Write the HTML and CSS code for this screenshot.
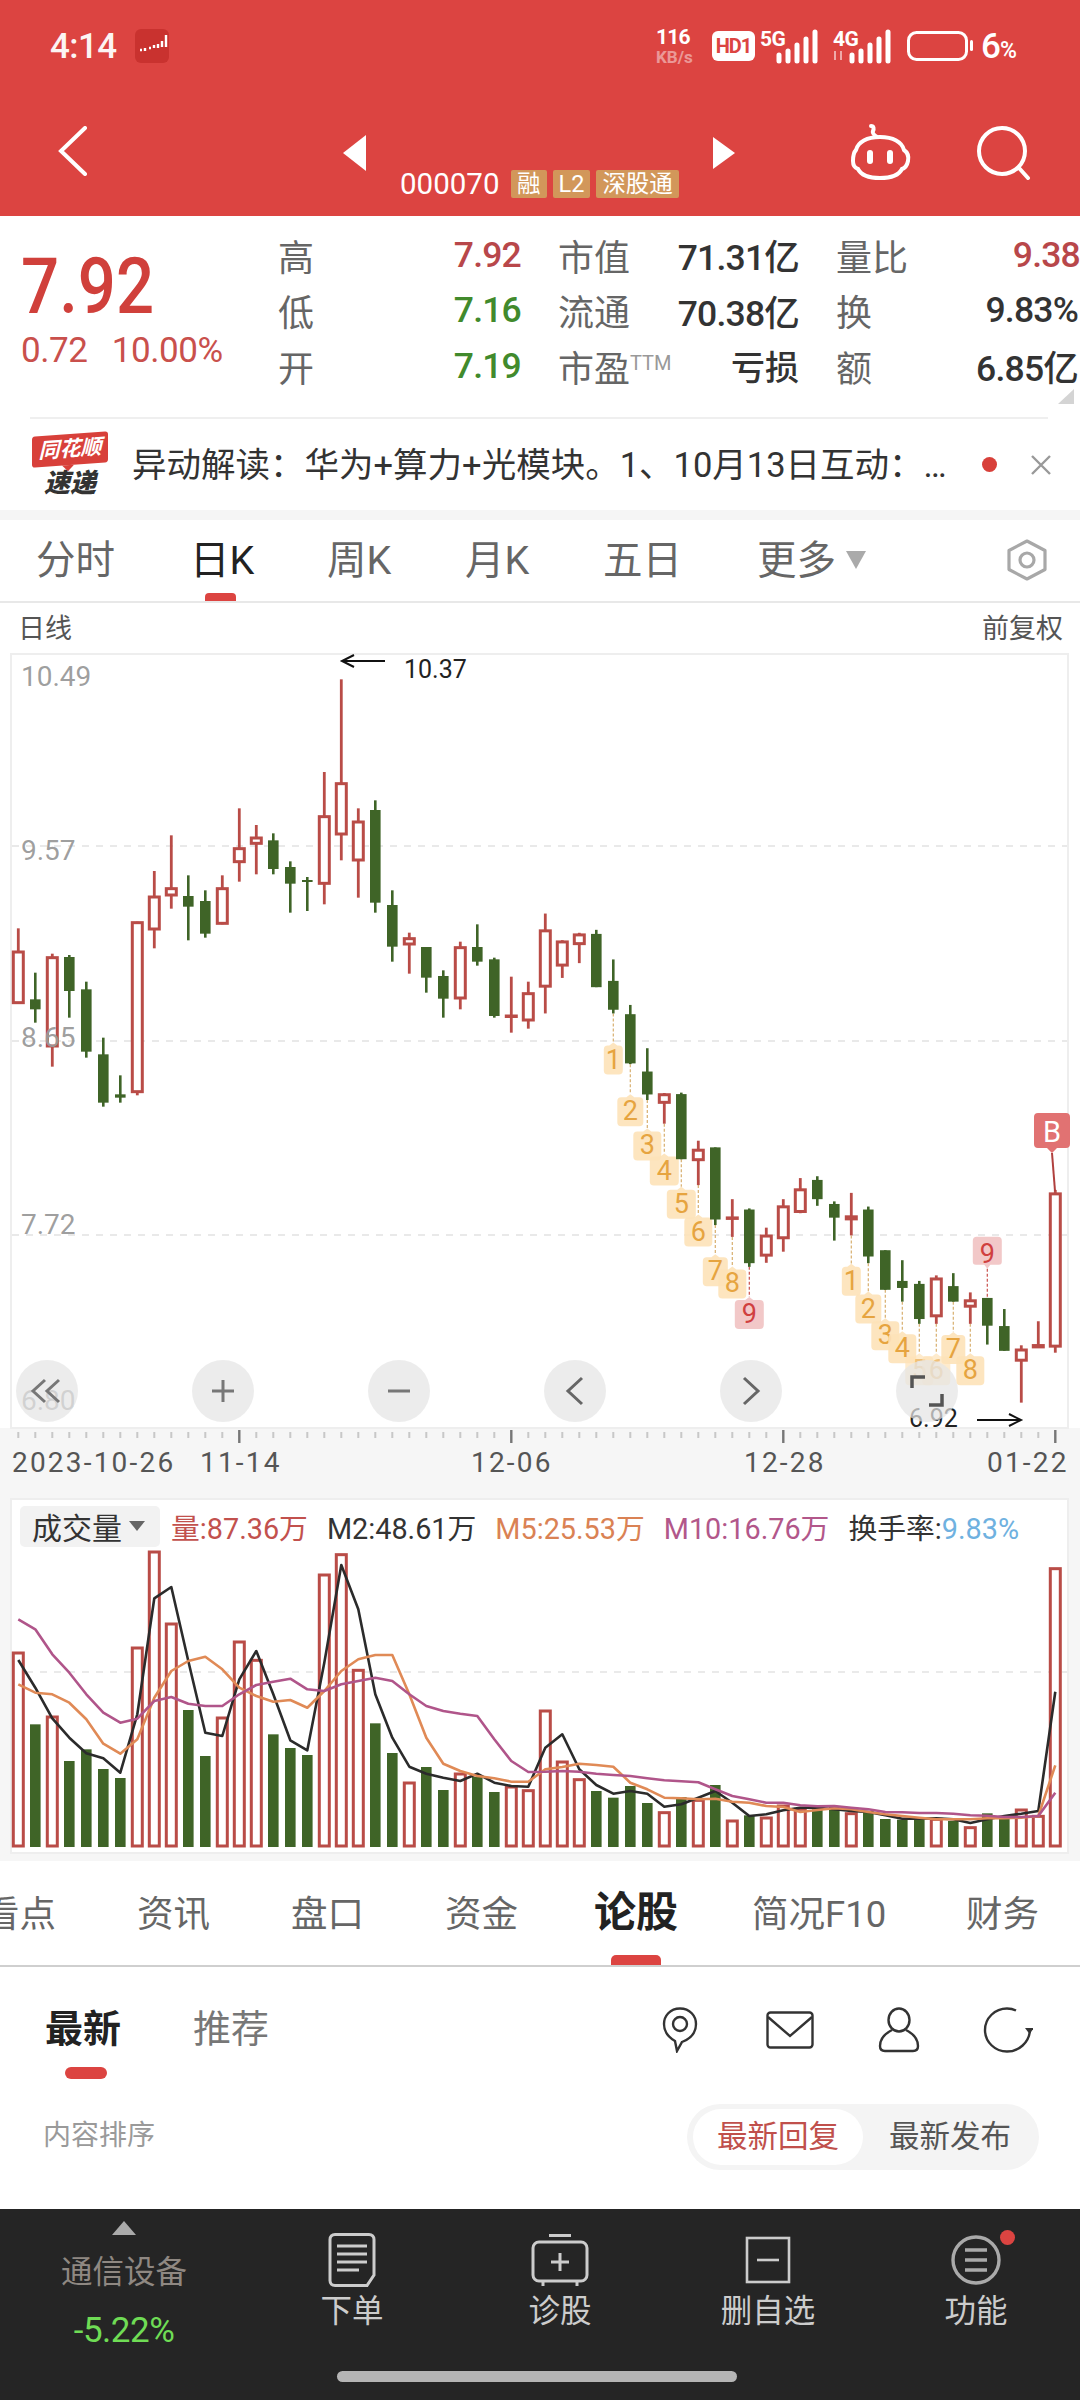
FILE: index.html
```html
<!DOCTYPE html>
<html lang="zh">
<head>
<meta charset="utf-8">
<title>000070</title>
<link rel="stylesheet" href="styles.css">
</head>
<body>
<div class="phone">
  <header class="top">
    <div class="status">
      <span class="time">4:14</span>
      <svg class="app-ico" width="34" height="34" viewBox="0 0 34 34"><rect width="34" height="34" rx="6" fill="#c9322f"/><path d="M5 21h2M10 19v3M14 19h2M19 16v3M23 15v4M27 12v6M31 6v12" stroke="#fff" stroke-width="2.4"/></svg>
      <div class="status-right">
        <div class="speed"><span class="speed-num">116</span><span class="speed-unit">KB/s</span></div>
        <span class="hd">HD1</span>
        <svg class="net" width="61" height="36" viewBox="0 0 61 36"><text x="0" y="18" class="net-t">5G</text><path d="M19 27v6M28 23v10M37 17v16M46 11v22M55 4v29" stroke="#fff" stroke-width="5" stroke-linecap="round"/></svg>
        <svg class="net net2" width="60" height="36" viewBox="0 0 60 36"><text x="0" y="18" class="net-t">4G</text><path d="M2 23v9M8 23v9" stroke="#fff" stroke-width="2" opacity=".55"/><path d="M19 27v6M28 23v10M37 17v16M46 11v22M55 4v29" stroke="#fff" stroke-width="5" stroke-linecap="round"/></svg>
        <svg class="batt" width="66" height="30" viewBox="0 0 66 30"><rect x="1.5" y="1.5" width="58" height="27" rx="8" fill="none" stroke="#fff" stroke-width="3"/><rect x="63" y="9" width="3" height="11" rx="1.5" fill="#fff"/></svg>
        <span class="pct">6<small>%</small></span>
      </div>
    </div>
    <nav class="nav">
      <svg class="back" width="30" height="50" viewBox="0 0 30 50"><path d="M27 2 3 25l24 23" fill="none" stroke="#fff" stroke-width="4" stroke-linecap="round"/></svg>
      <div class="nav-mid">
        <div class="arrows">
          <svg width="23" height="36" viewBox="0 0 23 36"><path d="M23 0v36L0 18z" fill="#fff"/></svg>
          <svg width="22" height="32" viewBox="0 0 22 32"><path d="M0 0v32l22-16z" fill="#fff"/></svg>
        </div>
        <div class="code-row">
          <span class="code">000070</span>
          <span class="tag">融</span><span class="tag">L2</span><span class="tag">深股通</span>
        </div>
      </div>
      <svg class="robot" width="62" height="56" viewBox="0 0 62 56"><path d="M21 2c3 0 3 3 2 5s1 4 4 6" fill="none" stroke="#fff" stroke-width="4" stroke-linecap="round"/><path d="M6 26C8 18 17 13 30 13s22 5 24 13c3 2 5 6 4 11s-3 7-6 8c-3 6-11 9-22 9S11 51 8 45c-3-1-5-4-5-8s1-9 3-11z" fill="none" stroke="#fff" stroke-width="4"/><rect x="17" y="26" width="6" height="14" rx="3" fill="#fff"/><rect x="37" y="26" width="6" height="14" rx="3" fill="#fff"/></svg>
      <svg class="search" width="54" height="54" viewBox="0 0 54 54"><circle cx="25" cy="25" r="23" fill="none" stroke="#fff" stroke-width="4"/><path d="M42 42l9 10" stroke="#fff" stroke-width="4" stroke-linecap="round"/></svg>
    </nav>
  </header>

  <section class="quote">
    <div class="price-col">
      <div class="price">7.92</div>
      <div class="change"><span>0.72</span><span>10.00%</span></div>
    </div>
    <div class="stats">
      <div class="stat"><span class="k">高</span><span class="v up">7.92</span></div>
      <div class="stat"><span class="k">市值</span><span class="v">71.31亿</span></div>
      <div class="stat"><span class="k">量比</span><span class="v up edge">9.38</span></div>
      <div class="stat"><span class="k">低</span><span class="v down">7.16</span></div>
      <div class="stat"><span class="k">流通</span><span class="v">70.38亿</span></div>
      <div class="stat"><span class="k">换</span><span class="v">9.83%</span></div>
      <div class="stat"><span class="k">开</span><span class="v down">7.19</span></div>
      <div class="stat"><span class="k">市盈<sup class="ttm">TTM</sup></span><span class="v cjk">亏损</span></div>
      <div class="stat"><span class="k">额</span><span class="v">6.85亿</span></div>
    </div>
    <span class="fold"></span>
  </section>

  <section class="news">
    <div class="logo">
      <div class="logo-flag">同花顺</div>
      <div class="logo-word">速递</div>
    </div>
    <p class="news-text">异动解读：华为+算力+光模块。1、10月13日互动：…</p>
    <span class="news-dot"></span>
    <svg class="news-x" width="22" height="22" viewBox="0 0 22 22"><path d="M2 2l18 18M20 2 2 20" stroke="#999" stroke-width="2.4"/></svg>
  </section>

  <section class="period">
    <div class="period-tabs">
      <span class="ptab">分时</span>
      <span class="ptab active">日K</span>
      <span class="ptab">周K</span>
      <span class="ptab">月K</span>
      <span class="ptab">五日</span>
      <span class="ptab more">更多<i class="tri"></i></span>
    </div>
    <svg class="hex" width="44" height="42" viewBox="0 0 44 42"><path d="M22 2 40 11.500v19L22 40 4 30.500v-19z" fill="none" stroke="#a8a8a8" stroke-width="3.200" stroke-linejoin="round"/><circle cx="22" cy="21" r="7" fill="none" stroke="#a8a8a8" stroke-width="3.200"/></svg>
  </section>

  <div class="chart-head"><span>日线</span><span>前复权</span></div>

  <div class="chart-wrap">
    <svg id="price" class="chart" width="1080" height="845" viewBox="0 652 1080 845"></svg>
    <div class="chart-btns">
      <span class="cbtn"><svg width="34" height="26" viewBox="0 0 34 26"><path d="M15 2 3 13l12 11M29 2 17 13l12 11" fill="none" stroke="#777" stroke-width="3"/></svg></span>
      <span class="cbtn"><svg width="26" height="26" viewBox="0 0 26 26"><path d="M2 13h22M13 2v22" stroke="#777" stroke-width="3"/></svg></span>
      <span class="cbtn"><svg width="26" height="26" viewBox="0 0 26 26"><path d="M2 13h22" stroke="#777" stroke-width="3"/></svg></span>
      <span class="cbtn"><svg width="20" height="30" viewBox="0 0 20 30"><path d="M17 2 3 15l14 13" fill="none" stroke="#666" stroke-width="3"/></svg></span>
      <span class="cbtn"><svg width="20" height="30" viewBox="0 0 20 30"><path d="M3 2l14 13L3 28" fill="none" stroke="#666" stroke-width="3"/></svg></span>
      <span class="cbtn"><svg width="34" height="34" viewBox="0 0 34 34"><path d="M2 14V3h13M32 20v11H19" fill="none" stroke="#555" stroke-width="3.500"/></svg></span>
    </div>
  </div>

  <div class="vol-wrap">
    <svg id="volume" class="chart" width="1080" height="363" viewBox="0 1497 1080 363"></svg>
    <div class="legend">
      <span class="pill">成交量<i class="pill-tri"></i></span>
      <span class="l-red">量:87.36万</span>
      <span class="l-dark">M2:48.61万</span>
      <span class="l-orange">M5:25.53万</span>
      <span class="l-purple">M10:16.76万</span>
      <span class="l-dark">换手率:<b class="l-blue">9.83%</b></span>
    </div>
  </div>

  <section class="subtabs">
    <span class="stab">看点</span>
    <span class="stab">资讯</span>
    <span class="stab">盘口</span>
    <span class="stab">资金</span>
    <span class="stab active">论股</span>
    <span class="stab">简况F10</span>
    <span class="stab">财务</span>
  </section>

  <section class="forum-head">
    <span class="ftab active">最新</span>
    <span class="ftab">推荐</span>
    <div class="forum-icons">
      <svg width="36" height="46" viewBox="0 0 36 46"><path d="M18 1.500C8 1.500 2 9 2 17c0 7 4 13 11 17l2 10 5-9c8-3 14-9 14-18C34 9 28 1.500 18 1.500z" fill="none" stroke="#333" stroke-width="2.400"/><circle cx="18" cy="17" r="7" fill="none" stroke="#333" stroke-width="2.400"/></svg>
      <svg width="48" height="38" viewBox="0 0 48 38"><rect x="1.500" y="1.500" width="45" height="35" rx="3" fill="none" stroke="#333" stroke-width="2.400"/><path d="M2 6l22 19L46 6" fill="none" stroke="#333" stroke-width="2.400"/></svg>
      <svg width="42" height="46" viewBox="0 0 42 46"><ellipse cx="21" cy="13" rx="10.500" ry="11.500" fill="none" stroke="#333" stroke-width="2.400"/><path d="M14 23C6 27 2 33 2 39c0 3 2 5 5 5h28c3 0 5-2 5-5 0-6-4-12-12-16" fill="none" stroke="#333" stroke-width="2.400"/></svg>
      <svg width="50" height="46" viewBox="0 0 50 46"><path d="M33 3.500C30 2 27 1.500 24 1.500 12 1.500 2 11 2 23s10 21.500 22 21.500c12 0 22-9 23-21" fill="none" stroke="#333" stroke-width="2.400"/><path d="M42 21h9l-4.500 6z" fill="#333"/></svg>
    </div>
  </section>

  <section class="sort-row">
    <span class="sort-label">内容排序</span>
    <div class="seg">
      <span class="seg-item on">最新回复</span>
      <span class="seg-item">最新发布</span>
    </div>
  </section>

  <footer class="bottom">
    <div class="sector">
      <i class="sector-tri"></i>
      <span class="sector-name">通信设备</span>
      <span class="sector-pct">-5.22%</span>
    </div>
    <div class="action">
      <svg width="48" height="54" viewBox="0 0 48 54"><path d="M7 1.500h34c3 0 5 2 5 5V42l-7 10.500H7c-3 0-5-2-5-5v-41c0-3 2-5 5-5z" fill="none" stroke="#ccc" stroke-width="3"/><path d="M9 13h30M9 21h30M9 29h30M9 37h22" stroke="#ccc" stroke-width="2.800"/></svg>
      <span>下单</span>
    </div>
    <div class="action">
      <svg width="58" height="54" viewBox="0 0 58 54"><path d="M18 2.500h22" stroke="#ccc" stroke-width="3"/><rect x="2" y="9" width="54" height="39" rx="6" fill="none" stroke="#ccc" stroke-width="3"/><path d="M29 20v18M20 29h18M12 49v4M46 49v4" stroke="#ccc" stroke-width="3"/></svg>
      <span>诊股</span>
    </div>
    <div class="action">
      <svg width="46" height="54" viewBox="0 0 46 54"><rect x="2" y="5" width="42" height="44" fill="none" stroke="#ccc" stroke-width="2.600"/><path d="M12 27h22" stroke="#ccc" stroke-width="2.600"/></svg>
      <span>删自选</span>
    </div>
    <div class="action has-dot">
      <svg width="52" height="54" viewBox="0 0 52 54"><circle cx="26" cy="27" r="23" fill="none" stroke="#aaa" stroke-width="3.400"/><path d="M15 17h22M15 27h22M15 37h22" stroke="#aaa" stroke-width="3.400"/></svg>
      <span>功能</span>
      <i class="red-dot"></i>
    </div>
    <i class="home-bar"></i>
  </footer>
</div>
<script src="chart.js"></script>
</body>
</html>
```

FILE: styles.css
```css
* { box-sizing: border-box; margin: 0; padding: 0; }
html, body { width: 1080px; height: 2400px; overflow: hidden; background: #fff; }
body { font-family: Roboto, "Noto Sans CJK SC", sans-serif; color: #333; }
i { display: block; font-style: normal; }
svg { display: block; flex: none; }
.phone { width: 1080px; height: 2400px; display: flex; flex-direction: column; overflow: hidden; }

/* header */
.top { height: 216px; background: #dc4441; color: #fff; }
.status { height: 92px; display: flex; align-items: center; padding-left: 50px; }
.time { font-size: 35px; width: 67px; letter-spacing: -.6px; font-weight: 500; opacity: .94; }
.app-ico { margin-left: 18px; }
.status-right { margin-left: auto; margin-right: 60px; display: flex; align-items: center; }
.speed { display: flex; flex-direction: column; width: 50px; font-weight: 700; line-height: 1; }
.speed-num { font-size: 21px; letter-spacing: -.8px; }
.speed-unit { font-size: 17px; opacity: .45; margin-top: 1px; white-space: nowrap; }
.hd { width: 43px; height: 30px; margin-left: 6px; background: #fff; color: #dc4441; border-radius: 6px; font-size: 20px; font-weight: 700; line-height: 30px; text-align: center; letter-spacing: -1px; }
.net { margin-left: 5px; }
.net2 { margin-left: 12px; }
.net-t { font: 700 21px Roboto, sans-serif; fill: #fff; letter-spacing: -.6px; }
.batt { margin-left: 14px; }
.pct { margin-left: 8px; font-size: 35px; font-weight: 500; width: 39px; line-height: 1; white-space: nowrap; letter-spacing: -1px; }
.pct small { font-size: 23px; }

.nav { height: 124px; display: flex; align-items: flex-start; padding-left: 58px; }
.back { margin-top: 34px; }
.nav-mid { width: 392px; margin-left: 255px; padding-top: 43px; }
.arrows { display: flex; justify-content: space-between; align-items: center; height: 35px; }
.code-row { display: flex; align-items: center; height: 28px; padding-left: 57px; }
.code { font-size: 29.500px; width: 111px; letter-spacing: 0; }
.tag { height: 28px; padding: 0 6px; margin-right: 6px; background: #d2975a; border-radius: 2px; font-size: 23.500px; line-height: 28px; color: #fff; }
.robot { margin-top: 32px; margin-left: 115px; }
.search { margin-top: 34px; margin-left: 65px; }

/* quote */
.quote { position: relative; height: 204px; display: flex; }
.quote::after { content: ""; position: absolute; left: 30px; right: 32px; bottom: 1px; height: 2px; background: #efefef; }
.price-col { width: 278px; padding-left: 21px; }
.price { font-size: 78px; line-height: 70px; margin-top: 36px; color: #d0403b; font-weight: 500; transform: scaleX(.86); transform-origin: left center; }
.change { display: flex; gap: 24px; margin-top: 9px; font-size: 35px; line-height: 40px; color: #c9504c; letter-spacing: -.4px; }
.stats { display: grid; grid-template-columns: 243px 241px 242px; grid-auto-rows: 55.500px; column-gap: 37px; padding-top: 11px; }
.stat { display: flex; justify-content: space-between; align-items: center; white-space: nowrap; }
.k { font-size: 36px; color: #666; }
.v { font-size: 35.500px; color: #333; letter-spacing: -.8px; font-weight: 500; }
.v.cjk { font-size: 34px; letter-spacing: 0; }
.up { color: #b8474a; }
.down { color: #418a2c; }
.edge { margin-right: -2px; }
.ttm { font-size: 20px; color: #999; vertical-align: 12px; line-height: 0; }
.fold { position: absolute; right: 6px; top: 173px; width: 0; height: 0; border-style: solid; border-width: 0 0 15px 16px; border-color: transparent transparent #d4d4d4 transparent; }

/* news */
.news { height: 90px; display: flex; align-items: center; padding-left: 32px; }
.logo { width: 76px; }
.logo-flag { position: relative; height: 31px; background: #d8403a; border-radius: 3px; color: #fff; font-size: 21px; font-weight: 700; font-style: italic; line-height: 31px; text-align: center; white-space: nowrap; transform: skewY(-4deg); }
.logo-flag::after { content: ""; position: absolute; left: 30px; top: 31px; border-style: solid; border-width: 6px 6px 0; border-color: #d8403a transparent transparent; }
.logo-word { margin-top: 5px; font-size: 26px; line-height: 26px; font-weight: 900; font-style: italic; text-align: center; color: #333; }
.news-text { margin-left: 24px; width: 850px; font-size: 34.500px; line-height: 44px; white-space: nowrap; overflow: hidden; color: #333; }
.news-dot { width: 15px; height: 15px; border-radius: 50%; background: #d8403a; }
.news-x { margin-left: 33px; }

/* period tabs */
.period { height: 93px; border-top: 10px solid #f5f5f5; border-bottom: 2px solid #e8e8e8; display: flex; align-items: center; padding-left: 36px; position: relative; }
.period-tabs { display: grid; grid-template-columns: 154px 137px 138px 138px 154px 120px; }
.ptab { position: relative; font-size: 39.500px; line-height: 81px; color: #666; white-space: nowrap; }
.ptab.active { color: #222; }
.ptab.active::after { content: ""; position: absolute; left: 15px; top: 73px; width: 31px; height: 8px; background: #dc4441; border-radius: 4px 4px 0 0; }
.more { display: flex; align-items: center; gap: 10px; }
.tri { width: 0; height: 0; border-style: solid; border-width: 18px 10px 0; border-color: #aaa transparent transparent; }
.hex { margin-left: 128px; }

.chart-head { height: 50px; padding: 0 17px 2px 18px; display: flex; justify-content: space-between; align-items: center; font-size: 27px; color: #555; }

.chart-wrap { position: relative; height: 845px; }
.chart { overflow: hidden; }
.chart-btns { position: absolute; left: 16px; top: 707px; display: flex; gap: 114px; }
.cbtn { width: 62px; height: 62px; border-radius: 50%; background: rgba(228, 228, 228, .72); display: flex; align-items: center; justify-content: center; }

.vol-wrap { position: relative; height: 363px; }
.legend { position: absolute; left: 20px; top: 8px; height: 41px; display: flex; align-items: center; gap: 19px; font-size: 28.800px; white-space: nowrap; }
.pill { display: flex; align-items: center; width: 140px; height: 41px; padding-left: 12px; gap: 7px; background: #f2f2f2; border-radius: 5px; color: #333; font-size: 30px; margin-right: -8px; }
.pill-tri { border-style: solid; border-width: 10px 8px 0; border-color: #666 transparent transparent; }
.l-red { color: #c2514d; }
.l-dark { color: #333; }
.l-orange { color: #da8254; }
.l-purple { color: #b2578a; }
.l-blue { color: #6fb1e0; font-weight: 400; }

/* sub tabs */
.subtabs { height: 106px; margin-left: -17px; width: 1097px; border-bottom: 2px solid #cfcfcf; display: grid; grid-template-columns: 154px 154px 154px 149px 158px 214px 114px; align-items: center; }
.stab { position: relative; font-size: 36.500px; color: #666; white-space: nowrap; line-height: 108px; height: 104px; }
.stab.active { font-size: 42px; font-weight: 700; color: #222; line-height: 104px; }
.stab.active::after { content: ""; position: absolute; left: 17px; top: 94px; width: 50px; height: 10px; background: #dc4441; border-radius: 5px 5px 0 0; }

.forum-head { height: 114px; display: flex; align-items: flex-start; padding-left: 45px; position: relative; }
.ftab { position: relative; font-size: 38px; line-height: 48px; margin-top: 38px; width: 148px; color: #777; }
.ftab.active { font-weight: 700; color: #222; }
.ftab.active::after { content: ""; position: absolute; left: 20px; top: 62px; width: 42px; height: 12px; background: #dc4441; border-radius: 6px; }
.forum-icons { position: absolute; left: 662px; top: 40px; display: flex; align-items: center; }
.forum-icons svg:nth-child(2) { margin-left: 68px; }
.forum-icons svg:nth-child(3) { margin-left: 64px; }
.forum-icons svg:nth-child(4) { margin-left: 63px; }

.sort-row { height: 129px; display: flex; align-items: flex-start; padding-left: 43px; }
.sort-label { font-size: 28px; line-height: 40px; margin-top: 36px; color: #9a9a9a; width: 644px; }
.seg { margin-top: 24px; width: 352px; height: 66px; background: #f4f4f4; border-radius: 33px; display: flex; align-items: center; padding-left: 6px; }
.seg-item { width: 170px; height: 56px; border-radius: 28px; font-size: 30.500px; line-height: 56px; text-align: center; color: #555; }
.seg-item + .seg-item { margin-left: 2px; }
.seg-item.on { background: #fff; color: #c0504c; }

/* bottom */
.bottom { position: relative; height: 191px; background: #252525; display: flex; align-items: flex-start; }
.sector { width: 248px; display: flex; flex-direction: column; align-items: center; }
.sector-tri { margin-top: 12px; border-style: solid; border-width: 0 12.500px 14px; border-color: transparent transparent #aaa; }
.sector-name { margin-top: 16px; font-size: 31.500px; line-height: 44px; color: #8f8882; }
.sector-pct { margin-top: 14px; font-size: 35px; line-height: 44px; color: #6fdc55; letter-spacing: -.5px; }
.action { position: relative; width: 208px; display: flex; flex-direction: column; align-items: center; padding-top: 24px; font-size: 31.500px; line-height: 44px; color: #ccc; }
.action span { margin-top: 3px; }
.red-dot { position: absolute; left: 128px; top: 21px; width: 15px; height: 15px; border-radius: 50%; background: #dc4441; }
.home-bar { position: absolute; left: 337px; top: 162px; width: 400px; height: 11px; border-radius: 6px; background: #b5b5b5; }
```

FILE: chart.js
```js
(function () {
  var RED = '#b94c47', GREEN = '#3f6427', NS = 'http://www.w3.org/2000/svg';
  function X(i) { return 18.3 + 17 * i; }
  function ya(z) { return 640 + z / 3; }
  function yb(z) { return 880 + z / 2.703; }
  function el(parent, name, attrs, text) {
    var n = document.createElementNS(NS, name);
    for (var k in attrs) n.setAttribute(k, attrs[k]);
    if (text !== undefined) n.textContent = text;
    parent.appendChild(n);
    return n;
  }

  var a = [
    ['r',862,930,1088,1088],['g',995,1075,1105,1145],['r',938,947,1218,1277],['g',942,948,1050,1130],
    ['g',1022,1045,1232,1250],['g',1190,1240,1385,1397],['g',1303,1360,1370,1385],['r',842,842,1355,1363],
    ['r',690,765,867,922],['r',583,740,765,803],['g',703,765,797,898],['g',748,780,878,890],
    ['r',703,740,850,850],['r',502,620,665,722],['r',552,588,610,700],['g',577,598,684,700],
    ['g',661,678,728,815],['g',708,717,722,810],['r',393,524,730,790],['r',115,425,582,658],
    ['r',502,540,660,770],['g',478,507,785,815],['g',748,792,917,962],['r',875,890,912,998],
    ['g',918,918,1010,1055],['g',988,1005,1073,1130],['r',902,917,1074,1105],['g',850,918,962,974],
    ['g',950,955,1125,1130],['r',1007,1122,1127,1175],['r',1022,1055,1140,1163]
  ].map(function (c) { return [c[0], ya(c[1]), ya(c[2]), ya(c[3]), ya(c[4])]; });
  var b = [
    ['r',88,132,287,358],['r',160,162,230,262],['r',140,143,172,222],['g',132,143,287,287],
    ['g',212,270,348,358],['g',335,360,493,495],['g',452,515,577,592],['r',573,575,601,656],
    ['g',572,576,752,752],['r',702,725,756,822],['g',720,720,915,930],['r',860,908,914,962],
    ['g',885,888,1033,1043],['r',937,957,1014,1032],['r',860,878,967,1002],['r',803,832,896,898],
    ['g',798,808,860,878],['g',866,873,910,972],['r',843,905,916,958],['g',880,888,1015,1033],
    ['g',998,998,1105,1105],['g',1025,1081,1100,1137],['g',1081,1089,1184,1197],['r',1066,1073,1178,1197],
    ['g',1060,1095,1137,1137],['r',1112,1132,1152,1197],['g',1127,1127,1202,1253],['g',1157,1203,1270,1270],
    ['r',1255,1265,1298,1410],['r',1190,1253,1262,1262],['r',835,843,1260,1275]
  ].map(function (c) { return [c[0], yb(c[1]), yb(c[2]), yb(c[3]), yb(c[4])]; });
  var candles = a.concat(b);

  var labels = [
    [35,'1',480,18,1],[36,'2',620,25,1],[37,'3',712,27,1],[38,'4',780,28,1],[39,'5',870,28,1],
    [40,'6',945,27,1],[41,'7',1052,24,1],[42,'8',1085,27,1],[43,'9',1168,28,2],
    [49,'1',1078,18,1],[50,'2',1153,25,1],[51,'3',1225,27,1],[52,'4',1260,27,1],[53,'5',1320,27,3],
    [54,'6',1320,27,3],[55,'7',1262,23,1],[56,'8',1320,27,1],[57,'9',1005,28,4]
  ];

  var p = document.getElementById('price');
  el(p, 'rect', { x: 0, y: 1427, width: 1080, height: 70, fill: '#f6f6f6' });
  el(p, 'rect', { x: 11, y: 653, width: 1057, height: 774, fill: '#fff', stroke: '#eeeeee', 'stroke-width': 2 });
  [845, 1040, 1234].forEach(function (y) {
    el(p, 'line', { x1: 12, x2: 1067, y1: y, y2: y, stroke: '#e2e2e2', 'stroke-width': 1.5, 'stroke-dasharray': '7 7' });
  });

  // TD sequence connectors and badges, under the candles
  labels.forEach(function (l) {
    var c = candles[l[0]], x = X(l[0]), cy = yb(l[2]), h = 16, w = l[3] / 2 + 0.5;
    var above = l[4] === 4, redTag = l[4] === 2 || l[4] === 4;
    var col = redTag ? '#c9504c' : '#d8ae6e';
    if (above) el(p, 'line', { x1: x, x2: x, y1: cy + h, y2: c[1], stroke: col, 'stroke-width': 1.2, 'stroke-dasharray': '3 2' });
    else el(p, 'line', { x1: x, x2: x, y1: c[4], y2: cy - h, stroke: col, 'stroke-width': 1.2, 'stroke-dasharray': '3 2' });
    var fill = redTag ? '#f1c2c2' : '#fde2b8';
    var d = above
      ? 'M' + (x - w) + ' ' + (cy - h + 4) + 'q0-4 4-4h' + (2 * w - 8) + 'q4 0 4 4v' + (2 * h - 11) + 'q0 3-3 3h-' + (w - 6) + 'l-' + 3 + ' 4-' + 3 + '-4h-' + (w - 6) + 'q-3 0-3-3z'
      : 'M' + x + ' ' + (cy - h) + 'l4 3h' + (w - 8) + 'q4 0 4 4v' + (2 * h - 11) + 'q0 4-4 4h-' + (2 * w - 8) + 'q-4 0-4-4v-' + (2 * h - 11) + 'q0-4 4-4h' + (w - 8) + 'z';
    el(p, 'path', { d: d, fill: fill, 'fill-opacity': l[4] === 3 ? 0.7 : 0.9 });
    el(p, 'text', { x: x, y: cy + 10, 'text-anchor': 'middle', 'font-size': 27, 'font-family': 'Roboto, sans-serif', fill: redTag ? '#d0403f' : '#e6a440', 'fill-opacity': l[4] === 3 ? 0.6 : 1 }, l[1]);
  });

  // candles
  candles.forEach(function (c, i) {
    var x = X(i), col = c[0] === 'r' ? RED : GREEN;
    if (c[0] === 'r') {
      el(p, 'line', { x1: x, x2: x, y1: c[1], y2: c[4], stroke: col, 'stroke-width': 2.8 });
      el(p, 'rect', { x: x - 5, y: c[2] + 1, width: 10, height: Math.max(c[3] - c[2] - 2, 0.5), fill: '#fff', stroke: col, 'stroke-width': 3 });
    } else {
      el(p, 'line', { x1: x, x2: x, y1: c[1], y2: c[4], stroke: col, 'stroke-width': 2.6 });
      el(p, 'rect', { x: x - 5.3, y: c[2], width: 10.6, height: Math.max(c[3] - c[2], 2), fill: col });
    }
  });

  // axis labels on the price pane
  [['10.49', 21, 685], ['9.57', 21, 859], ['8.65', 21, 1046], ['7.72', 21, 1233], ['6.80', 21, 1409]].forEach(function (t) {
    el(p, 'text', { x: t[1], y: t[2], 'font-size': 28, 'font-family': 'Roboto, sans-serif', fill: '#999', 'fill-opacity': 0.95 }, t[0]);
  });

  // high and low markers
  el(p, 'path', { d: 'M385 660H343M354 654l-12 6 12 6', fill: 'none', stroke: '#111', 'stroke-width': 2 });
  el(p, 'text', { x: 404, y: 677, 'font-size': 25, 'font-family': 'Roboto, sans-serif', fill: '#222' }, '10.37');
  el(p, 'text', { x: 909, y: 1426, 'font-size': 25, 'font-family': 'Roboto, sans-serif', fill: '#222' }, '6.92');
  el(p, 'path', { d: 'M977 1419H1021M1009 1413l12 6-12 6', fill: 'none', stroke: '#111', 'stroke-width': 2 });

  // B badge
  el(p, 'path', { d: 'M1052 1152L1055 1190', stroke: '#b0403e', 'stroke-width': 2 });
  el(p, 'path', { d: 'M1038 1112h28q4 0 4 4v27q0 4-4 4h-9l-5 5-5-5h-9q-4 0-4-4v-27q0-4 4-4z', fill: '#e17272' });
  el(p, 'text', { x: 1052, y: 1141, 'text-anchor': 'middle', 'font-size': 29, 'font-family': 'Roboto, sans-serif', fill: '#fff' }, 'B');

  // time axis
  candles.forEach(function (c, i) {
    var major = i === 13 || i === 29 || i === 45 || i === 61;
    el(p, 'line', { x1: X(i), x2: X(i), y1: major ? 1429 : 1431, y2: major ? 1442 : 1437, stroke: major ? '#777' : '#c8c8c8', 'stroke-width': major ? 2.4 : 2 });
  });
  [['2023-10-26', 12], ['11-14', 200], ['12-06', 471], ['12-28', 744], ['01-22', 987]].forEach(function (t) {
    el(p, 'text', { x: t[1], y: 1471, 'font-size': 28, 'font-family': 'Roboto, sans-serif', fill: '#555', 'letter-spacing': 2.2 }, t[0]);
  });

  // volume pane
  var v = document.getElementById('volume');
  el(v, 'rect', { x: 0, y: 1497, width: 1080, height: 363, fill: '#f6f6f6' });
  el(v, 'rect', { x: 11, y: 1498, width: 1057, height: 354, fill: '#fff', stroke: '#eeeeee', 'stroke-width': 2 });
  el(v, 'line', { x1: 12, x2: 1067, y1: 1671, y2: 1671, stroke: '#e4e4e4', 'stroke-width': 1.5, 'stroke-dasharray': '7 7' });
  function yv(z) { return 1480 + z / 3; }
  var vols = [513,730,705,840,805,864,891,498,210,426,687,825,708,480,535,760,801,822,279,218,565,727,816,903,858,927,876,888,933,915,926,
    687,840,893,930,950,915,966,992,948,955,912,1017,1003,1008,972,982,985,975,995,990,1014,1016,1012,1012,1020,1037,997,1012,984,1003,260];
  vols.forEach(function (z, i) {
    var x = X(i), top = yv(z), bot = yv(1098);
    if (candles[i][0] === 'r') el(v, 'rect', { x: x - 5, y: top + 1, width: 10, height: bot - top - 2, fill: '#fff', stroke: RED, 'stroke-width': 3 });
    else el(v, 'rect', { x: x - 5.3, y: top, width: 10.6, height: bot - top, fill: GREEN });
  });
  function line(vals, col) {
    var pts = vals.map(function (z, i) { return X(i) + ',' + yv(z).toFixed(1); }).join(' ');
    el(v, 'polyline', { points: pts, fill: 'none', stroke: col, 'stroke-width': 2.6, 'stroke-linejoin': 'round' });
  }
  line([537,620,712,770,817,832,875,700,352,318,540,755,765,595,510,640,778,808,545,252,385,640,770,857,878,890,900,878,905,915,917,
    800,760,865,912,938,930,938,977,970,950,930,965,1005,1000,988,980,980,985,990,993,1003,1013,1013,1012,1015,1026,1015,1005,998,990,632], '#2b2b2b');
  line([610,635,640,665,715,788,818,775,650,570,540,527,565,620,645,662,657,680,630,570,535,522,522,640,770,848,870,885,892,902,902,
    865,858,848,852,857,905,925,950,952,955,953,962,965,975,978,993,987,982,985,993,1000,1005,1010,1015,1015,1015,1012,1012,1010,1005,853], '#e08a56');
  line([415,445,520,575,640,695,725,713,660,648,668,675,675,640,612,602,593,625,630,610,600,590,600,640,675,690,698,705,775,840,873,
    872,870,872,878,882,885,892,898,901,904,925,945,955,965,965,973,976,975,980,985,993,994,996,996,998,1003,1004,1008,1008,1005,935], '#b0558a');
})();
```
